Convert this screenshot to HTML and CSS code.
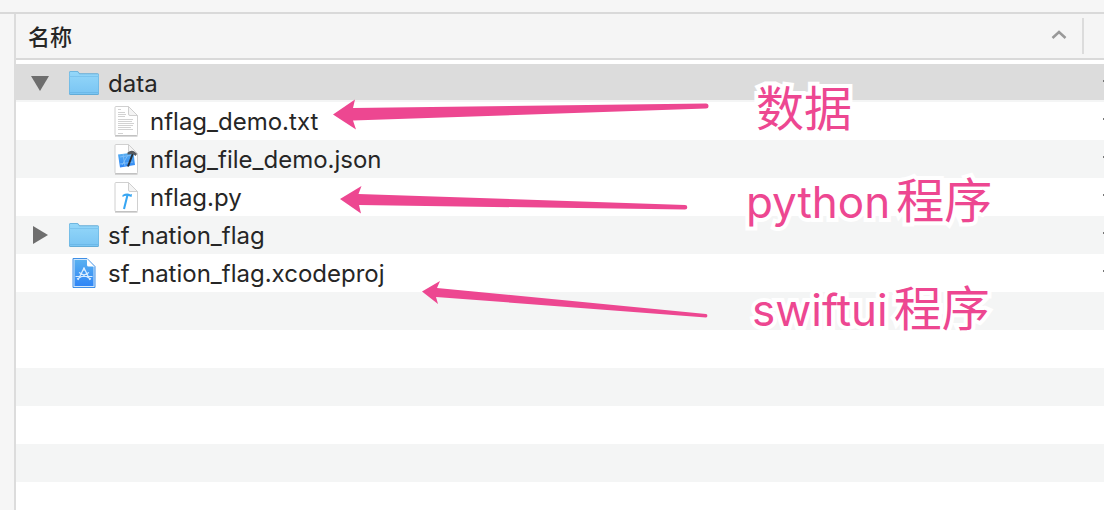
FILE: index.html
```html
<!DOCTYPE html>
<html lang="zh-CN">
<head>
    <meta charset="UTF-8">
    <meta name="viewport" content="width=device-width, initial-scale=1.0">
    <title>nation_flag</title>
    <link rel="stylesheet" href="styles.css">
</head>

<body>
    <!-- shared icon shapes -->
    <svg class="defs" aria-hidden="true">
        <defs>
            <linearGradient id="folderFill" x1="0" y1="0" x2="0" y2="1">
                <stop offset="0" stop-color="#94d7f9"/>
                <stop offset="1" stop-color="#7ac5f3"/>
            </linearGradient>
            <linearGradient id="blueFill" x1="0" y1="0" x2="0" y2="1">
                <stop offset="0" stop-color="#58b0f0"/>
                <stop offset="1" stop-color="#2f86f6"/>
            </linearGradient>
            <symbol id="folder" viewBox="0 0 32 26">
                <path d="M1 23.500V2.500Q1 1 2.500 1H9q1 0 1.600 1l1 1.300H29.500Q31 3.300 31 5v18.500q0 1.500-1.500 1.500h-27Q1 25 1 23.500Z" fill="#62acd8"/>
                <path d="M1.500 23V3q0-1.200 1.200-1.200H9q.6 0 1 .7l1.400 1.700H30q.5 0 .5.800v18q0 1-1 1h-27q-1 0-1-1Z" fill="url(#folderFill)"/>
                <path d="M1.500 6.500H30.500" stroke="#7cc4ee" stroke-width="1"/>
                <path d="M2 22.500H30" stroke="#6cb9e9" stroke-width="1"/>
            </symbol>
            <symbol id="page" viewBox="0 0 26 32">
                <path d="M3 1.500H15.500L24.500 10.500V29.500q0 1-1 1H3q-1 0-1-1V2.500q0-1 1-1Z" fill="#fff" stroke="#d0d0d0"/>
                <path d="M2 31H24.500" stroke="#b4b4b4"/>
                <path d="M15.500 1.500V9q0 1.500 1.500 1.500h7.500Z" fill="#f4f4f4" stroke="#cfcfcf"/>
            </symbol>
        </defs>
    </svg>

    <div class="toolbar"></div>
    <div class="window">
        <aside class="sidebar"></aside>
        <main class="files">
            <table>
                <thead>
                    <tr>
                        <th class="name-col">
                            <button class="sort" type="button">
                                <span>名称</span>
                                <svg width="16" height="10" viewBox="0 0 16 10" aria-hidden="true"><path d="M1.500 8L8 2l6.500 6" fill="none" stroke="#999" stroke-width="2.500"/></svg>
                            </button>
                        </th>
                        <th class="date-col"></th>
                    </tr>
                </thead>
                <tbody>
                    <tr class="selected">
                        <td><div class="entry">
                            <button class="toggle" type="button" aria-label="data"><svg width="18" height="16" viewBox="0 0 18 16"><path d="M0 1H18L9 16Z"/></svg></button>
                            <svg class="icon-folder"><use href="#folder"/></svg>
                            <span>data</span>
                        </div></td>
                        <td class="date"></td>
                    </tr>
                    <tr>
                        <td><div class="entry child">
                            <svg class="icon-file" viewBox="0 0 26 32">
                                <use href="#page"/>
                                <path d="M5 4.500h3M5 7.500h7M5 9.500h8M5 11.500h7M5 14.500h15M5 16.500h14M5 18.500h16M5 20.500h15M5 22.500h13M5 24.500h15M5 28.500h5" stroke="#d2d2d2"/>
                            </svg>
                            <span>nflag_demo.txt</span>
                        </div></td>
                        <td class="date"></td>
                    </tr>
                    <tr>
                        <td><div class="entry child">
                            <svg class="icon-file" viewBox="0 0 26 32">
                                <use href="#page"/>
                                <path d="M5 11.500L20.500 9.500 22 22 7 24.500Z" fill="url(#blueFill)"/>
                                <path d="M7 14l12-2M7 21l13-2M10 11l2 12M9 22l6-10" stroke="#7dbdf8" fill="none"/>
                                <path d="M20 10L15 23.500" stroke="#27303b" stroke-width="2"/>
                                <path d="M14.500 9.500q4-3 7.500-.5l2 2-1.500 2-2.500-2-5.500.5Z" fill="#55595e"/>
                            </svg>
                            <span>nflag_file_demo.json</span>
                        </div></td>
                        <td class="date"></td>
                    </tr>
                    <tr>
                        <td><div class="entry child">
                            <svg class="icon-file" viewBox="0 0 26 32">
                                <use href="#page"/>
                                <path d="M14.500 14L11 28" stroke="#37a6f3" stroke-width="2"/>
                                <path d="M9.500 14q4.500-2.500 8-.5l1.500-.5-.5 3-1.500-.5q-4-1.500-7.500.5Z" fill="#37a6f3"/>
                            </svg>
                            <span>nflag.py</span>
                        </div></td>
                        <td class="date"></td>
                    </tr>
                    <tr>
                        <td><div class="entry">
                            <button class="toggle" type="button" aria-label="sf_nation_flag"><svg width="18" height="18" viewBox="0 0 18 18"><path d="M2 0L17 9 2 18Z"/></svg></button>
                            <svg class="icon-folder"><use href="#folder"/></svg>
                            <span>sf_nation_flag</span>
                        </div></td>
                        <td class="date"></td>
                    </tr>
                    <tr>
                        <td><div class="entry project">
                            <svg class="icon-file" viewBox="0 0 26 32">
                                <path d="M2 1.500H16L24 9.500V30.500H2Z" fill="#cfe6fb" stroke="#3f8fe6"/>
                                <path d="M3.500 3H15.500L22.500 10V29H3.500Z" fill="url(#blueFill)"/>
                                <path d="M16 2V8q0 1.500 1.500 1.500H23Z" fill="#fff"/>
                                <path d="M12.500 12L7 23M13.500 12l5.500 11M4.500 19.500h5M11.500 19.500h10M8 15.500l12 6.500M18 15.500l-12 6.500" fill="none" stroke="#d8edff" stroke-width="1.200"/>
                                <path d="M12 10.500h2v3h-2Z" fill="#d8edff"/>
                            </svg>
                            <span>sf_nation_flag.xcodeproj</span>
                        </div></td>
                        <td class="date"></td>
                    </tr>
                    <tr><td></td><td></td></tr>
                    <tr><td></td><td></td></tr>
                    <tr><td></td><td></td></tr>
                    <tr><td></td><td></td></tr>
                    <tr><td></td><td></td></tr>
                    <tr><td></td><td></td></tr>
                </tbody>
            </table>
        </main>
    </div>

    <!-- hand-placed notes over the list -->
    <svg class="arrows" width="1104" height="510" viewBox="0 0 1104 510" aria-hidden="true">
        <path d="M333 114.500L355 99.500 353 108 706 103.500A2.500 2.500 0 0 1 706 108.500L353 120.500 356 129.500Z"/>
        <path d="M340 199L361.500 186 358.500 194 685 205A2.300 2.300 0 0 1 685 209.600L359 205 361 213.500Z"/>
        <path d="M422 291.500L440 281 437 288 706 314A1.800 1.800 0 0 1 706 317.500L436 297 438 304Z"/>
    </svg>
    <p class="note note-data">数据</p>
    <p class="note note-python"><span class="latin">python</span> <span>程序</span></p>
    <p class="note note-swift"><span class="latin">swiftui</span> <span>程序</span></p>
</body>

</html>
```
FILE: styles.css
```css
* {
    box-sizing: border-box;
}

body {
    margin: 0;
    height: 100vh;
    display: flex;
    flex-direction: column;
    position: relative;
    overflow: hidden;
    background-color: #fff;
    color: #262626;
    font-family: Inter, "Noto Sans CJK SC", sans-serif;
    font-size: 24px;
}

.defs {
    position: absolute;
    width: 0;
    height: 0;
}

.toolbar {
    flex: none;
    height: 14px;
    background-color: #f6f6f6;
    border-bottom: 2px solid #d9d9d9;
}

.window {
    flex: 1;
    display: flex;
    min-height: 0;
}

.sidebar {
    flex: none;
    width: 16px;
    background-color: #f6f6f6;
    border-right: 2px solid #dcdcdc;
}

.files {
    flex: 1;
    min-width: 0;
    overflow: hidden;
}

table {
    width: 100%;
    table-layout: fixed;
    border-collapse: separate;
    border-spacing: 0;
}

th {
    height: 46px;
    padding: 0;
    background-color: #f5f5f5;
    border-bottom: 2px solid #d9d9d9;
}

.date-col {
    width: 22px;
    background: linear-gradient(#dcdcdc, #dcdcdc) no-repeat 0 4px / 2px 36px #f5f5f5;
}

.sort {
    display: flex;
    justify-content: space-between;
    align-items: center;
    width: 100%;
    padding: 0 15px 2px 12px;
    border: none;
    background: none;
    color: #262626;
    font-family: "Noto Sans CJK SC", sans-serif;
    font-size: 22px;
    font-weight: 500;
    line-height: 28px;
}

tbody::before {
    content: "";
    display: block;
    height: 4px;
}

td {
    height: 38px;
    padding: 0;
}

tbody tr:nth-child(odd) {
    background-color: #f4f5f5;
}

tbody tr.selected {
    background: linear-gradient(#dcdcdc, #dcdcdc) no-repeat 0 0 / 100% 36px #f4f5f5;
}

.date {
    background: linear-gradient(#777, #777) no-repeat right 16px / 1px 2px;
}

.entry {
    display: flex;
    align-items: center;
    height: 38px;
    padding-left: 15px;
    white-space: nowrap;
}

.child {
    padding-left: 97px;
}

.project {
    padding-left: 55px;
}

.toggle {
    display: flex;
    width: 18px;
    margin-right: 19px;
    padding: 0;
    border: none;
    background: none;
}

.toggle path {
    fill: #6e6e6e;
}

.icon-folder {
    width: 32px;
    height: 26px;
    margin-right: 8px;
}

.icon-file {
    width: 26px;
    height: 32px;
    margin-right: 11px;
}

.arrows {
    position: absolute;
    top: 0;
    left: 0;
    fill: #ed4791;
    pointer-events: none;
}

.note {
    position: absolute;
    display: flex;
    align-items: baseline;
    gap: 6px;
    margin: 0;
    color: #ed4791;
    font-family: "Noto Sans CJK SC", sans-serif;
    font-size: 48px;
    line-height: 60px;
    white-space: nowrap;
    -webkit-text-stroke: 8px #fff;
    stroke-linejoin: round;
    paint-order: stroke fill;
}

.latin {
    font-family: Inter, sans-serif;
    font-size: 44px;
}

.note-data {
    top: 75px;
    left: 756px;
}

.note-python {
    top: 167px;
    left: 746px;
}

.note-swift {
    top: 275px;
    left: 752px;
}
```
